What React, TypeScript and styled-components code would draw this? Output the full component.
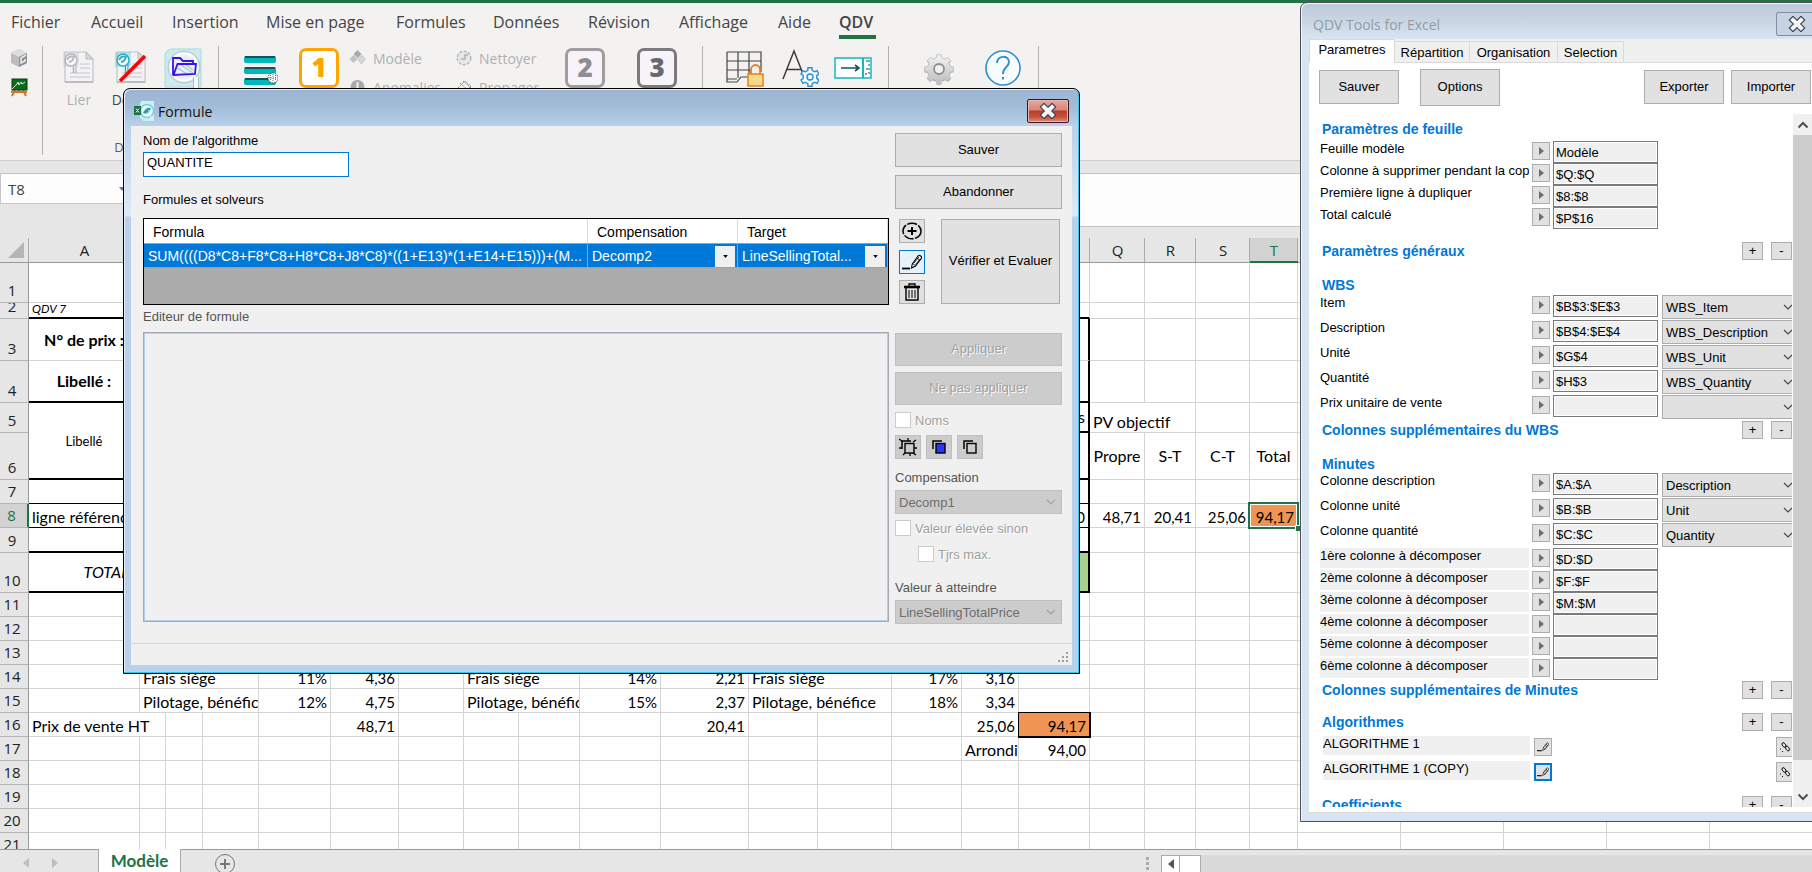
import React from "react";
import styled, { createGlobalStyle, css } from "styled-components";

const ui = `"Open Sans", "Noto Sans", sans-serif`;
const sans = `"Liberation Sans", Arial, sans-serif`;
const cellFont = `Lato, "Open Sans", sans-serif`;
const green = "#217346";
const blue = "#0078d7";

const Global = createGlobalStyle`
  *, *::before, *::after { box-sizing: border-box; }
  body { margin: 0; font-family: ${sans}; font-size: 13px; color: #000; overflow: hidden; }
  button, input, select, textarea { font: inherit; color: inherit; margin: 0; border-radius: 0; }
  button { padding: 0; }
`;

const Page = styled.div`
  position: relative;
  display: flex;
  flex-direction: column;
  height: 100vh;
  overflow: hidden;
  background: #e6e6e6;
`;

/* ---------- Ribbon ---------- */

const RibbonShell = styled.header`
  flex: none;
  border-top: 3px solid ${green};
  border-bottom: 1px solid #d0cecc;
  height: 161px;
  background: #f3f2f1;
  font-family: ${ui};
`;

const Menu = styled.nav`
  display: flex;
  height: 40px;
  padding-left: 11px;
  font-size: 16px;
  line-height: 20px;
  color: #444;
`;

const MenuTab = styled.button<{ $w: number; $active?: boolean }>`
  width: ${(p) => p.$w}px;
  height: 36px;
  padding-top: 9px;
  display: flex;
  justify-content: flex-start;
  align-items: flex-start;
  text-align: left;
  white-space: nowrap;
  border: 0;
  border-bottom: 4px solid ${(p) => (p.$active ? green : "transparent")};
  background: none;
  font-weight: ${(p) => (p.$active ? 600 : 400)};
`;

const Groups = styled.div`
  display: flex;
  height: 112px;
  padding-top: 3px;
`;

const Group = styled.div<{ $w: number; $pad?: number }>`
  position: relative;
  display: flex;
  align-items: flex-start;
  width: ${(p) => p.$w}px;
  height: 109px;
  padding: 2px 0 0 ${(p) => p.$pad ?? 0}px;
  border-right: 1px solid #b5b3b1;
  font-size: 14px;
`;

const GroupCaption = styled.span`
  position: absolute;
  bottom: 0;
  left: 0;
  right: 0;
  text-align: center;
  font-size: 13px;
  line-height: 16px;
  color: #605e5c;
`;

const Tool = styled.button<{ $w: number; $off?: boolean }>`
  display: flex;
  flex-direction: column;
  align-items: center;
  width: ${(p) => p.$w}px;
  border: 0;
  background: none;
  line-height: 20px;
  color: ${(p) => (p.$off ? "#b1b0af" : "#444")};
  svg { display: block; margin-bottom: 6px; }
`;

const ToolColumn = styled.div<{ $w: number }>`
  display: flex;
  flex-direction: column;
  gap: 9px;
  width: ${(p) => p.$w}px;
`;

const SmallTool = styled.button`
  display: flex;
  align-items: center;
  gap: 6px;
  height: 20px;
  border: 0;
  background: none;
  color: #b1b0af;
  svg { flex: none; }
`;

const Step = styled.span<{ $c: string; $t: string; $bg: string }>`
  width: 40px;
  height: 40px;
  border: 3px solid ${(p) => p.$c};
  border-radius: 7px;
  background: ${(p) => p.$bg};
  color: ${(p) => p.$t};
  font-size: 26px;
  font-weight: 800;
  line-height: 33px;
  text-align: center;
`;

/* ---------- Formula bar ---------- */

const FormulaBar = styled.div`
  flex: none;
  display: flex;
  height: 54px;
  margin-top: 12px;
  border-top: 1px solid #c6c6c6;
  border-bottom: 1px solid #c6c6c6;
  background: #fdfdfd;
  font-family: ${ui};
`;

const NameBox = styled.div`
  display: flex;
  justify-content: space-between;
  align-items: center;
  width: 132px;
  height: 30px;
  padding: 0 5px 0 7px;
  border: 1px solid #c6c6c6;
  border-top: 0;
  font-size: 15px;
  color: #444;
`;

const BarFiller = styled.div`
  flex: none;
  width: 132px;
  height: 53px;
  background: #e6e6e6;
`;

/* ---------- Sheet ---------- */

const SheetArea = styled.main`
  flex: 1;
  min-height: 0;
  overflow: hidden;
  background: #fff;
`;

const Sheet = styled.table`
  table-layout: fixed;
  width: 1813px;
  min-width: 100%;
  border-collapse: separate;
  border-spacing: 0;
  font-family: ${cellFont};
  font-size: 16px;
  line-height: 20px;
  td, th { padding: 0; font-weight: 400; }
`;

const ColHead = styled.th<{ $on?: boolean }>`
  height: 36px;
  padding-top: 11px !important;
  background: linear-gradient(#e6e6e6 11px, transparent 11px),
    linear-gradient(to right, transparent calc(100% - 1px), #ababab calc(100% - 1px)),
    ${(p) => (p.$on ? "#d2d2d2" : "#e6e6e6")};
  border-bottom: ${(p) => (p.$on ? `2px solid ${green}` : "1px solid #999")};
  color: ${(p) => (p.$on ? green : "#222")};
  font-family: ${ui};
  font-size: 15px;
  line-height: 20px;
  vertical-align: middle;
`;

const Corner = styled(ColHead)`
  text-align: right;
  svg { display: block; margin-left: 8px; }
`;

const RowHead = styled.th<{ $on?: boolean }>`
  border-right: ${(p) => (p.$on ? `2px solid ${green}` : "1px solid #999")};
  border-bottom: 1px solid #b5b5b5;
  background: ${(p) => (p.$on ? "#d2d2d2" : "#e6e6e6")};
  color: ${(p) => (p.$on ? green : "#222")};
  font-family: ${ui};
  font-size: 15px;
`;

type BoxProps = { $h: number; $align?: string; $mid?: boolean };
const Inner = styled.div<BoxProps>`
  display: flex;
  align-items: ${(p) => (p.$mid ? "center" : "flex-end")};
  justify-content: ${(p) => p.$align ?? "flex-start"};
  height: ${(p) => p.$h}px;
  padding: 0 3px;
  overflow: hidden;
  white-space: nowrap;
`;

const HeadInner = styled(Inner)`
  padding: 0 4px 2px 0;
`;

type CellStyle = {
  $right?: string;
  $bottom?: string;
  $bg?: string;
  $variant?: "bold" | "italic" | "note" | "small" | "num";
  $boxed?: boolean;
};
const Cell = styled.td<CellStyle>`
  position: relative;
  border-right: ${(p) => p.$right ?? "1px solid #d4d4d4"};
  border-bottom: ${(p) => p.$bottom ?? "1px solid #d4d4d4"};
  background: ${(p) => p.$bg ?? "#fff"};
  ${(p) => p.$variant === "bold" && css`font-weight: 700 !important;`}
  ${(p) => p.$variant === "italic" && css`font-style: italic;`}
  ${(p) => p.$variant === "note" && css`font-style: italic; font-size: 12px; line-height: 16px;`}
  ${(p) => p.$variant === "small" && css`font-size: 13px;`}
  ${(p) => p.$variant === "num" && css`font-size: 15px;`}
  ${(p) => p.$boxed && css`box-shadow: 0 0 0 1px #000; border-color: #000; z-index: 1;`}
`;

const Selection = styled.span`
  position: absolute;
  z-index: 2;
  inset: -2px -2px -2px -2px;
  border: 2px solid ${green};
  box-shadow: inset 0 0 0 1px #fff;
  &::after {
    content: "";
    position: absolute;
    right: -4px;
    bottom: -4px;
    width: 6px;
    height: 6px;
    border: solid #fff;
    border-width: 1px 0 0 1px;
    background: ${green};
  }
`;

const COLS = "ABCDEFGHIJKLMNOPQRST".split("");
const WIDTHS = [111, 26, 37, 56, 72, 68, 65, 55, 61, 81, 88, 69, 74, 70, 57, 71, 55, 51, 54, 48, 103, 103, 103, 103, 103];
const HEIGHTS = [40, 16, 42, 42, 30, 47, 24, 24, 25, 40, ...Array(11).fill(24)];
const VISIBLE_HEADS = ["A", "Q", "R", "S", "T"];

type CellData = {
  t: string;
  span?: number;
  rows?: number;
  a?: "center" | "flex-end";
  mid?: boolean;
  v?: CellStyle["$variant"];
  bg?: string;
  boxed?: boolean;
};
const C = "center" as const;
const ORANGE = "#f09454";
const num = (t: string, extra: Partial<CellData> = {}): CellData => ({ t, a: "flex-end", v: "num", ...extra });

const DATA: Record<string, CellData> = {
  A2: { t: "QDV 7", v: "note" },
  A3: { t: "N° de prix :", a: C, mid: true, v: "bold" },
  A4: { t: "Libellé :", a: C, mid: true, v: "bold" },
  A5: { t: "Libellé", a: C, mid: true, v: "small", rows: 2 },
  P5: { t: "es", a: "flex-end", mid: true },
  Q5: { t: "PV objectif", span: 2 },
  Q6: { t: "Propre", a: C, mid: true },
  R6: { t: "S-T", a: C, mid: true },
  S6: { t: "C-T", a: C, mid: true },
  T6: { t: "Total", a: C, mid: true },
  A8: { t: "ligne référence" },
  P8: num("0"),
  Q8: num("48,71"),
  R8: num("20,41"),
  S8: num("25,06"),
  T8: num("94,17", { bg: ORANGE }),
  A10: { t: "TOTAL :", a: "flex-end", mid: true, v: "italic" },
  P10: { t: "", bg: "#a9d08e" },
  B14: { t: "Frais siège", span: 3 },
  E14: num("11%"),
  F14: num("4,36"),
  H14: { t: "Frais siège", span: 2 },
  J14: num("14%"),
  K14: num("2,21"),
  L14: { t: "Frais siège", span: 2 },
  N14: num("17%"),
  O14: num("3,16"),
  B15: { t: "Pilotage, bénéfice", span: 3 },
  E15: num("12%"),
  F15: num("4,75"),
  H15: { t: "Pilotage, bénéfice", span: 2 },
  J15: num("15%"),
  K15: num("2,37"),
  L15: { t: "Pilotage, bénéfice", span: 2 },
  N15: num("18%"),
  O15: num("3,34"),
  A16: { t: "Prix de vente HT", span: 2 },
  F16: num("48,71"),
  K16: num("20,41"),
  O16: num("25,06"),
  P16: num("94,17", { bg: ORANGE, boxed: true }),
  O17: { t: "Arrondi" },
  P17: num("94,00"),
};

const THICK = "2px solid #000";
const THIN = "1px solid #000";
const ROW_LINES: Record<number, string> = { 2: THICK, 4: THICK, 6: THICK, 7: THIN, 8: THIN, 9: THICK, 10: THICK };

function bottomOf(row: number, col: number, rows = 1) {
  if (col > 15) return undefined;
  const last = row + rows - 1;
  if (last === 5 && col > 0) return THICK;
  return ROW_LINES[last];
}

function SheetRow({ row }: { row: number }) {
  const h = HEIGHTS[row - 1];
  const cells: React.ReactNode[] = [];
  for (let c = 0; c < WIDTHS.length; ) {
    const d = DATA[`${COLS[c] ?? "-"}${row}`];
    const span = d?.span ?? 1;
    if (row === 6 && c === 0) {
      c += 1;
      continue;
    }
    const full = d?.rows ? h + HEIGHTS[row] : h;
    const bottom = bottomOf(row, c, d?.rows);
    cells.push(
      <Cell
        key={c}
        colSpan={span}
        rowSpan={d?.rows ?? 1}
        $variant={d?.v}
        $bg={d?.bg}
        $boxed={d?.boxed}
        $right={c === 15 && row >= 3 && row <= 10 ? THICK : undefined}
        $bottom={bottom}
      >
        <Inner $h={full - (bottom === THICK ? 2 : 1)} $align={d?.a} $mid={d?.mid}>
          {d?.t}
        </Inner>
        {row === 8 && c === 19 && <Selection />}
      </Cell>
    );
    c += span;
  }
  return (
    <tr>
      <RowHead scope="row" $on={row === 8}>
        <HeadInner $h={h - 1} $align="center">{row}</HeadInner>
      </RowHead>
      {cells}
    </tr>
  );
}

/* ---------- Sheet tab bar ---------- */

const TabBar = styled.footer`
  flex: none;
  display: flex;
  height: 23px;
  border-top: 1px solid #999;
  background: #e6e6e6;
`;
const TabNav = styled.div`
  display: flex;
  gap: 23px;
  align-items: center;
  width: 99px;
  padding: 4px 0 0 23px;
  border-right: 1px solid #ababab;
`;
const SheetTab = styled.button`
  width: 82px;
  height: 23px;
  margin-top: -1px;
  border: 0;
  border-right: 1px solid #ababab;
  background: #fff;
  color: ${green};
  font: 700 17px/20px ${cellFont};
`;
const AddTab = styled.button`
  width: 22px;
  height: 22px;
  margin: 3px 0 0 33px;
  border: 0;
  background: none;
`;
const HScroll = styled.div`
  display: flex;
  width: 651px;
  margin: 5px 0 0 12px;
  background: #dadada;
`;
const HBtn = styled.button`
  width: 19px;
  height: 19px;
  border: 1px solid #ababab;
  background: #fff;
`;
const HThumb = styled.div`
  width: 21px;
  height: 19px;
  border: 1px solid #ababab;
  border-left: 0;
  background: #fff;
`;
const Spring = styled.div`
  flex: 1;
`;
const Dots = styled.div`
  width: 3px;
  margin-top: 7px;
  svg { display: block; }
`;

/* ---------- Formula dialog ---------- */

const Dialog = styled.section`
  position: absolute;
  z-index: 5;
  left: 123px;
  top: 88px;
  width: 957px;
  display: flex;
  flex-direction: column;
  padding: 0 7px 8px;
  border: 1px solid #000;
  border-radius: 7px 7px 0 0;
  background: linear-gradient(#9ab4d2, #a4bdd9 20px, #b9d1ea 37px, #dbe8f5 120px, #dbe8f5 127px, #b9d1ea 128px);
  box-shadow: inset -1px -1px 0 #35c6ea, inset 1px 1px 0 #e4eef8;
`;

const TitleBar = styled.div`
  display: flex;
  align-items: center;
  height: 37px;
  padding: 7px 3px 0;
  font-family: ${ui};
  font-size: 14px;
  color: #111;
`;
const TitleText = styled.h1`
  flex: 1;
  margin: 0 0 0 4px;
  font: inherit;
`;
const CloseRed = styled.button`
  width: 42px;
  height: 24px;
  border: 1px solid #43101c;
  border-radius: 2px;
  background: linear-gradient(#e8a99e, #d88678 10px, #b93c26 11px, #c35440 17px, #dd8f7c);
  box-shadow: inset 0 0 0 1px #eab5ab;
  svg { display: block; margin: auto; }
`;

const Body = styled.div`
  background: #f0f0f0;
`;
const Columns = styled.div`
  display: flex;
  gap: 6px;
  padding: 7px 10px 19px 12px;
`;
const Left = styled.div`
  width: 746px;
  display: flex;
  flex-direction: column;
`;
const Right = styled.div`
  flex: 1;
  display: flex;
  flex-direction: column;
`;
const Label = styled.label<{ $mt?: number; $mb?: number; $soft?: boolean }>`
  display: block;
  height: 16px;
  line-height: 16px;
  margin: ${(p) => p.$mt ?? 0}px 0 ${(p) => p.$mb ?? 0}px;
  color: ${(p) => (p.$soft ? "#555" : "#000")};
`;
const NameInput = styled.input`
  width: 206px;
  height: 25px;
  padding: 0 3px 4px;
  border: 1px solid ${blue};
  outline: 0;
  background: #fff;
`;
const GridBox = styled.div`
  height: 87px;
  border: 1px solid #000;
  background: #ababab;
`;
const Grid = styled.table`
  width: 100%;
  table-layout: fixed;
  border-collapse: separate;
  border-spacing: 0;
  font-size: 14px;
  th {
    height: 24px;
    padding: 2px 0 0 9px;
    border-right: 1px solid #dcdcdc;
    background: #fff;
    font-size: 14px;
    font-weight: 400;
    text-align: left;
  }
  td {
    height: 25px;
    padding: 0 0 0 4px;
    border: solid #a0a0a0;
    border-width: 1px 1px 1px 0;
    background: ${blue};
    color: #fff;
    white-space: nowrap;
  }
`;
const GridPick = styled.div`
  position: relative;
  display: flex;
`;
const GridSelect = styled.select`
  flex: 1;
  min-width: 0;
  height: 22px;
  padding: 0 24px 0 0;
  border: 0;
  appearance: none;
  background: transparent;
  text-overflow: ellipsis;
`;
const GridArrow = styled.span`
  position: absolute;
  right: 2px;
  top: 1px;
  width: 20px;
  height: 21px;
  background: #f0f0f0;
  pointer-events: none;
  svg { display: block; margin: 9px auto; }
`;
const Editor = styled.textarea`
  width: 746px;
  height: 290px;
  resize: none;
  border: 1px solid #a5aab5;
  box-shadow: inset 0 0 0 1px #b4cfe9;
  background: #f0f0f0;
  outline: 0;
`;
const Btn = styled.button<{ $h?: number; $mb?: number }>`
  height: ${(p) => p.$h ?? 34}px;
  margin-bottom: ${(p) => p.$mb ?? 0}px;
  padding-bottom: 2px;
  border: 1px solid #adadad;
  background: #e1e1e1;
  &:disabled {
    border-color: #bfbfbf;
    background: #ccc;
    color: #a0a0a0;
    text-shadow: 1px 1px 0 #fff;
  }
`;
const VerifyBtn = styled(Btn)`
  width: 119px;
`;
const VerifyRow = styled.div`
  display: flex;
  justify-content: space-between;
  margin: 10px 2px 29px 4px;
`;
const IconCol = styled.div`
  display: flex;
  flex-direction: column;
  justify-content: space-between;
`;
const IconBtn = styled.button<{ $on?: boolean; $dark?: boolean }>`
  display: flex;
  align-items: center;
  justify-content: center;
  width: 26px;
  height: 24px;
  border: 1px solid ${(p) => (p.$on ? blue : p.$dark ? "#bfbfbf" : "#adadad")};
  background: ${(p) => (p.$on ? "#e5f1fb" : p.$dark ? "#ccc" : "#e1e1e1")};
`;
const IconRow = styled.div`
  display: flex;
  gap: 5px;
  margin: 7px 0 11px;
`;
const Check = styled.label<{ $in?: boolean }>`
  display: flex;
  align-items: center;
  gap: 4px;
  height: 16px;
  padding-left: ${(p) => (p.$in ? 23 : 0)}px;
  color: #a0a0a0;
  text-shadow: 1px 1px 0 #fff;
  input {
    width: 16px;
    height: 16px;
    appearance: none;
    border: 1px solid #ccc;
    background: #fff;
  }
`;
const Checks = styled.div`
  display: flex;
  flex-direction: column;
  gap: 10px;
  margin: 6px 0 18px;
`;
const DropWrap = styled.div`
  position: relative;
  display: flex;
  svg { position: absolute; right: 6px; top: 9px; pointer-events: none; }
`;
const Drop = styled.select`
  width: 100%;
  height: 24px;
  padding: 0 3px;
  border: 1px solid #bfbfbf;
  appearance: none;
  background: #ccc;
  color: #6d6d6d;
  opacity: 1;
`;
const Status = styled.div`
  display: flex;
  justify-content: flex-end;
  align-items: flex-end;
  height: 22px;
  padding: 0 3px 2px;
  border-top: 1px solid #d7d7d7;
`;

/* ---------- Tools panel ---------- */

const Panel = styled.aside`
  position: absolute;
  z-index: 6;
  left: 1300px;
  right: -8px;
  top: 2px;
  display: flex;
  flex-direction: column;
  padding: 0 7px 8px 8px;
  border: 1px solid #4d5157;
  border-radius: 7px 0 0 0;
  background: linear-gradient(#bccad9, #c8d6e4 18px, #d7e4f2 36px);
  box-shadow: inset 1px 1px 0 #eef4fa;
`;
const PanelTitle = styled.div`
  display: flex;
  align-items: center;
  height: 36px;
  margin-right: -6px;
  padding: 6px 0 0 4px;
  font-family: ${ui};
  font-size: 14px;
  color: #959a9f;
`;
const CloseGray = styled.button`
  width: 42px;
  height: 24px;
  border: 1px solid #7f8fa5;
  border-radius: 2px;
  background: #c5d3e2;
  svg { display: block; margin: auto; }
`;
const PanelBody = styled.div`
  background: #fff;
`;
const Tabs = styled.div`
  display: flex;
  align-items: flex-end;
  height: 24px;
  background: #f0f0f0;
  box-shadow: inset 0 -1px 0 #d9d9d9;
`;
const Tab = styled.button<{ $w: number; $on?: boolean }>`
  width: ${(p) => p.$w}px;
  height: ${(p) => (p.$on ? 24 : 22)}px;
  padding-bottom: ${(p) => (p.$on ? 4 : 0)}px;
  border: 1px solid #d9d9d9;
  border-left-width: ${(p) => (p.$on ? 1 : 0)}px;
  border-bottom-color: ${(p) => (p.$on ? "#fff" : "#d9d9d9")};
  background: ${(p) => (p.$on ? "#fff" : "#f0f0f0")};
`;
const Actions = styled.div`
  display: flex;
  align-items: center;
  height: 51px;
  padding: 0 1px 3px 10px;
`;
const Action = styled(Btn)<{ $gap: number }>`
  width: 80px;
  margin-left: ${(p) => p.$gap}px;
`;
const ScrollBox = styled.div`
  display: flex;
  height: 693px;
  overflow: hidden;
`;
const Form = styled.div`
  flex: 1;
  min-width: 0;
  padding-left: 11px;
  margin-right: 1px;
  overflow: hidden;
`;
const VBar = styled.div`
  display: flex;
  flex-direction: column;
  width: 19px;
  background: #f0f0f0;
`;
const VBtn = styled.button`
  height: 21px;
  border: 0;
  background: #f0f0f0;
  svg { display: block; margin: auto; }
`;
const VThumb = styled.div`
  height: 625px;
  background: #cdcdcd;
`;
const Heading = styled.div<{ $mt: number; $mb?: number }>`
  display: flex;
  gap: 8px;
  align-items: center;
  height: 18px;
  margin: ${(p) => p.$mt}px 0 ${(p) => p.$mb ?? 0}px 2px;
  h2 {
    flex: 1;
    margin: 0;
    color: ${blue};
    font-size: 14px;
    line-height: 18px;
  }
`;
const PlusMinus = styled.button`
  width: 21px;
  height: 18px;
  border: 1px solid #adadad;
  background: #e1e1e1;
  line-height: 16px;
`;
const Field = styled.div<{ $h: number }>`
  display: flex;
  align-items: flex-start;
  height: ${(p) => p.$h}px;
`;
const FieldLabel = styled.label<{ $shade?: boolean }>`
  width: 209px;
  height: 20px;
  margin-right: 3px;
  overflow: hidden;
  white-space: nowrap;
  line-height: 16px;
  background: ${(p) => (p.$shade ? "#f0f0f0" : "#fff")};
`;
const ArrowBtn = styled.button`
  width: 18px;
  height: 18px;
  margin: 1px 3px 0 0;
  border: 1px solid #adadad;
  background: #e1e1e1;
  svg { display: block; margin: auto; }
`;
const FieldInput = styled.input`
  width: 105px;
  height: 22px;
  padding: 0 2px;
  border: 1px solid #7a7a7a;
  box-shadow: inset 0 0 0 1px #fff;
  background: #f0f0f0;
  outline: 0;
`;
const FieldPick = styled.div`
  position: relative;
  flex: 1;
  min-width: 0;
  margin-left: 4px;
  overflow: hidden;
  svg { position: absolute; right: -1px; top: 9px; pointer-events: none; }
`;
const FieldSelect = styled.select`
  display: block;
  width: 145px;
  height: 24px;
  padding: 0 3px;
  border: 1px solid #adadad;
  appearance: none;
  background: #e1e1e1;
`;
const Algo = styled.div`
  display: flex;
  align-items: flex-start;
  height: 25px;
  padding-left: 3px;
`;
const AlgoName = styled.span`
  width: 207px;
  height: 19px;
  margin-right: 4px;
  background: #f0f0f0;
  line-height: 16px;
`;
const AlgoBtn = styled.button<{ $on?: boolean }>`
  width: 18px;
  height: 18px;
  margin-top: 2px;
  border: ${(p) => (p.$on ? `2px solid ${blue}` : "1px solid #adadad")};
  background: #e1e1e1;
  svg { display: block; margin: auto; }
`;
const AlgoEnd = styled.button`
  width: 16px;
  height: 20px;
  margin: 1px 0 0 auto;
  border: 1px solid #adadad;
  border-right: 0;
  background: #e1e1e1;
  svg { display: block; margin: auto; }
`;
const PanelFoot = styled.div`
  height: 6px;
  border-bottom: 1px solid #d9d9d9;
`;
const PanelHeading = styled(TitleText)`
  margin-left: 0;
`;

/* ---------- Icons ---------- */

const CloseX = ({ s = 18 }: { s?: number }) => (
  <svg width={s} height="16" viewBox="0 0 18 16">
    <path d="M5 4 13 12M13 4 5 12" stroke="#3f4656" strokeWidth="6.400" strokeLinecap="square" />
    <path d="M5 4 13 12M13 4 5 12" stroke="#f6f6f6" strokeWidth="4" strokeLinecap="square" />
  </svg>
);
const Chevron = ({ c = "#444" }: { c?: string }) => (
  <svg width="10" height="7" viewBox="0 0 10 7" fill="none"><path d="M1 1l4 4 4-4" stroke={c} strokeWidth="1.1" /></svg>
);
const DownTri = ({ c = "#000", w = 5 }: { c?: string; w?: number }) => (
  <svg width={w} height={w === 5 ? 3 : 4} viewBox="0 0 6 4"><path d="M0 0h6L3 4z" fill={c} /></svg>
);
const DocIcon = ({ tint, strike }: { tint: string; strike?: boolean }) => (
  <svg width="34" height="36" viewBox="0 0 34 36">
    <path d="M3 4h21l7 7v23H3z" fill="#f3f2f6" stroke="#c4c3c8" strokeWidth="1.2" />
    <path d="M3 34h28" stroke="#b5b4b9" strokeWidth="1.500" />
    <path d="M24 4v7h7z" fill="#d9d8dd" stroke="#b9b8bd" />
    <path d="M18 16h10M18 20h10M8 25h20M8 29h20" stroke="#d6d4da" strokeWidth="1.4" />
    <path d="M1 4h16v13a8 8 0 0 1-3 2v6h-4v-6H1z" fill={tint} opacity=".25" />
    <circle cx="9" cy="12" r="6" fill="#f8f8fa" stroke={tint} strokeWidth="1.500" />
    <path d="M5 12c2-4 5-4 7-3-1 3-3 5-5 5" fill="none" stroke={tint} strokeWidth="1.800" />
    <path d="M11.500 17v8M14 16v9" stroke={tint} />
    {strike && <path d="M6 33 31 8" stroke="#f00" strokeWidth="3.6" />}
  </svg>
);
const FolderIcon = () => (
  <svg width="38" height="40" viewBox="0 0 38 40">
    <path d="M8 1h29v38H1V8a7 7 0 0 1 7-7z" fill="#cdeaef" stroke="#a5dbe2" />
    <circle cx="20" cy="19" r="16" fill="#dfe8ee" stroke="#a9c8d0" />
    <circle cx="20" cy="19" r="13.500" fill="#e9f0f4" stroke="#fff" strokeWidth="2" />
    <path d="M32 29v11" stroke="#a5bfc6" strokeWidth="6" />
    <path d="M32 29v11" stroke="#f5f8fa" strokeWidth="4" />
    <path d="M14 20l10 7M17 17l12 8M22 17l7 5" stroke="#a9cbd2" strokeWidth="1.500" />
    <path d="M9 27V10h7l3 3h10v3M9.500 27l4-11H32l-1 10z" fill="none" stroke="#3a10f0" strokeWidth="1.800" />
  </svg>
);
const BarsIcon = () => (
  <svg width="36" height="40" viewBox="0 0 36 40">
    {[8, 19, 30].map((y) => (
      <g key={y}>
        <rect x="2" y={y} width="32" height="7" rx="2" fill="#00b8b8" />
        <path d={`M3 ${y + 1}h30`} stroke="#14505f" strokeWidth="2" />
      </g>
    ))}
    <circle cx="31" cy="30" r="5" fill="#fff" stroke="#444" strokeDasharray="1.500 1" />
    <path d="M31 26v8M27 30h8M28.500 27v6M33.500 27v6" stroke="#555" strokeWidth=".8" strokeDasharray="1 1" />
  </svg>
);
const GridLock = () => (
  <svg width="40" height="40" viewBox="0 0 40 40" fill="none">
    <path d="M2 4h34v20M2 4v30h10l4-5h7M13 4v26M24 4v22M2 13h34M2 22h25M2 31h10" stroke="#444" strokeWidth="1.200" />
    <path d="M26 26v-4a4.500 5 0 0 1 9 0v4" stroke="#e8811c" strokeWidth="1.800" />
    <rect x="23" y="26" width="15" height="12" fill="#f8d98a" stroke="#e8811c" strokeWidth="1.500" />
  </svg>
);
const gearPath = (cx: number, cy: number, r: number, ri: number, n: number) => {
  const p: string[] = [];
  for (let i = 0; i < n; i++) {
    const a = (i / n) * Math.PI * 2 - Math.PI / 2;
    const s = (Math.PI * 2) / n;
    [[-0.2, r], [0.2, r], [0.3, ri], [0.7, ri]].forEach(([o, q]) =>
      p.push(`${(cx + Math.cos(a + o * s) * q).toFixed(1)} ${(cy + Math.sin(a + o * s) * q).toFixed(1)}`)
    );
  }
  return `M${p.join("L")}z`;
};
const AGear = () => (
  <svg width="40" height="40" viewBox="0 0 40 40" fill="none">
    <path d="M4 31 15 3l9 23M7.500 21.500H22" stroke="#3b3b3b" strokeWidth="1.500" />
    <path d={gearPath(31, 29, 9.5, 7, 6)} fill="#f3f9fd" stroke="#2b8fd0" strokeWidth="1.400" />
    <circle cx="31" cy="29" r="3" stroke="#2b8fd0" strokeWidth="1.400" />
  </svg>
);
const RulerIcon = () => (
  <svg width="40" height="40" viewBox="0 0 40 40" fill="none">
    <rect x="2" y="10" width="36" height="20" fill="#fff" stroke="#13b9bd" strokeWidth="1.500" />
    <path d="M30 10v20" stroke="#13b9bd" strokeWidth="2" />
    <path d="M8 20h17M22 17l4 3-4 3" stroke="#0f5562" strokeWidth="1.600" />
    <path d="M37 13h-4M37 17h-2M37 21h-4M37 25h-2M33 27v-2" stroke="#0f5562" strokeWidth="1.200" />
  </svg>
);
const BigGear = () => (
  <svg width="34" height="40" viewBox="0 0 34 40">
    <defs>
      <linearGradient id="steel" x1="0" y1="0" x2="0" y2="1">
        <stop offset="0" stopColor="#f4f4f5" />
        <stop offset="1" stopColor="#bdbdbf" />
      </linearGradient>
    </defs>
    <path d={gearPath(17, 22, 15, 12, 8)} fill="#a9a9ab" />
    <path d={gearPath(17, 21, 14.5, 11.5, 8)} fill="url(#steel)" stroke="#c6c6c8" />
    <circle cx="17" cy="21" r="5" fill="#f3f2f1" stroke="#8f8f92" strokeWidth="1.800" />
  </svg>
);
const HelpIcon = () => (
  <svg width="38" height="40" viewBox="0 0 38 40" fill="none">
    <circle cx="18" cy="20" r="17" fill="#f9fcfe" stroke="#2b8fd0" strokeWidth="1.600" />
    <path d="M12 15c0-8 12-8 12-1 0 5-6 5-6 12M18 29v2.500" stroke="#2b8fd0" strokeWidth="2" />
  </svg>
);
const CubeIcon = () => (
  <svg width="18" height="20" viewBox="0 0 18 20">
    <path d="M9 1l8 4v10l-8 4-8-4V5z" fill="#bdbcbe" />
    <path d="M9 1l8 4-8 4-8-4z" fill="#dedde0" />
    <path d="M9 9l8-4v10l-8 4z" fill="#8f8e91" />
    <path d="M16 7l-5 3v5l4-2v-2" stroke="#eee" fill="none" strokeWidth="1.500" />
  </svg>
);
const BoardIcon = () => (
  <svg width="18" height="20" viewBox="0 0 18 20">
    <path d="M5 13 2 19M13 13l3 6M1 15h16M9 13v3" stroke="#d8742a" strokeWidth="2" />
    <rect x="2" y="2" width="15" height="11" fill="#0c6b1c" stroke="#0a3d10" />
    <path d="M2 12l5-5 1-2 1 3 2-3 1 2 3-2" stroke="#d8f0d8" fill="none" />
  </svg>
);
const MiniModel = () => (
  <svg width="18" height="16" viewBox="0 0 17 16">
    <path d="M8 0l4 4-4 4-4-4z" fill="#a9a8aa" />
    <path d="M4 5l4 4-4 4-4-4z" fill="#c1c0c3" />
    <path d="M12 5l4 4-4 5-4-5z" fill="#d6d5d8" stroke="#b5b4b6" strokeWidth=".6" />
  </svg>
);
const MiniDial = () => (
  <svg width="17" height="16" viewBox="0 0 17 16" fill="none">
    <circle cx="8" cy="8" r="6.800" fill="#e7e6e9" stroke="#b9b8bb" strokeDasharray="3 1.500" strokeWidth="1.500" />
    <path d="M5 9h4V5h3" stroke="#b1b0b3" strokeWidth="1.500" />
  </svg>
);
const MiniWarn = () => (
  <svg width="18" height="16" viewBox="0 0 17 16">
    <circle cx="8" cy="8" r="7" fill="#a9a8aa" />
    <path d="M8 3v6M8 11v2" stroke="#f3f2f1" strokeWidth="2" />
  </svg>
);
const MiniSpread = () => (
  <svg width="17" height="16" viewBox="0 0 17 16" fill="none">
    <path d="M2 9l7-7 6 5-6 6zM4 4l9 8M7 2l8 7M1 12h5" stroke="#8a898b" strokeDasharray="2 1" />
  </svg>
);
const DialogIcon = () => (
  <svg width="20" height="20" viewBox="0 0 20 20">
    <path d="M7 0h13v20H9l-3-4V3z" fill="#c8f1f6" />
    <circle cx="13" cy="10" r="6.500" fill="#effcfd" stroke="#7fcfda" strokeWidth="1.500" />
    <path d="M9 12c2-5 5-6 8-5-1 3-3 6-6 6z" fill="#1fa5b8" />
    <path d="M10 13c2 0 4-2 5-4M16 15l3 3" stroke="#e6fbfd" />
    <rect x="0" y="5" width="7" height="9" fill="#1b7145" />
    <path d="M2 7.500l3 4M5 7.500l-3 4" stroke="#fff" />
  </svg>
);
const PlusRing = () => (
  <svg width="20" height="18" viewBox="0 0 20 18" fill="none" stroke="#000" strokeWidth="1.500">
    <ellipse cx="10" cy="9" rx="9" ry="7.800" strokeDasharray="10 1.500" />
    <path d="M10 5v8M5.500 9h9" strokeWidth="2" />
  </svg>
);
const PencilIcon = ({ w = 20 }: { w?: number }) => (
  <svg width={w} height={w * 0.8} viewBox="0 0 20 16" fill="none" stroke="#000">
    <path d="M0 14.500h8" strokeWidth="1.800" />
    <path d="M9.500 14l.8-4L16 2c1.500-1.500 4.500.5 3.300 2.500L13.500 12z" fill="#fff" strokeWidth="1.100" />
    <path d="M10.500 9.500l3.500 2.500M15 4l3 2.500M12 9l5-6M13.500 10.500l5-6" strokeWidth=".8" />
  </svg>
);
const TrashIcon = () => (
  <svg width="18" height="18" viewBox="0 0 18 18" fill="none" stroke="#000">
    <path d="M6 3V1h6v2" strokeWidth="1.300" />
    <path d="M1 4h16" strokeWidth="2.600" />
    <path d="M3 5v12h12V5" strokeWidth="1.400" />
    <path d="M6 7v8M9 7v8M12 7v8" strokeWidth="1" />
  </svg>
);
const CopyIcon = ({ fill = "none", rays }: { fill?: string; rays?: boolean }) => (
  <svg width="18" height="18" viewBox="0 0 18 18" fill="none" stroke="#000">
    <path d="M3 11V3h9" strokeWidth="1.500" />
    <rect x="6" y="5.500" width="9" height="9.500" fill={fill} strokeWidth="1.400" />
    {rays && <path d="M0 1l3 2M9 0v3M17 2l-3 2M18 10h-3M0 10h3M4 17l2-2M11 18v-3M17 17l-3-2" strokeWidth="1.300" />}
  </svg>
);
const PairIcon = () => (
  <svg width="12" height="12" viewBox="0 0 12 12" fill="none" stroke="#000" strokeWidth=".9">
    <ellipse cx="5" cy="4" rx="1.600" ry="2.600" transform="rotate(-35 5 4)" />
    <ellipse cx="8.500" cy="7.500" rx="1.600" ry="2.600" transform="rotate(-35 8.500 7.500)" />
    <path d="M1 8h1M3 10.500h1" />
  </svg>
);
const PlayTri = () => (
  <svg width="5" height="8" viewBox="0 0 5 8"><path d="M0 0l5 4-5 4z" fill="#6d6d6d" /></svg>
);
const Grip = () => (
  <svg width="11" height="11" viewBox="0 0 11 11" fill="#a0a0a0">
    {[[8, 0], [4, 4], [8, 4], [0, 8], [4, 8], [8, 8]].map(([x, y]) => (
      <rect key={`${x}${y}`} x={x} y={y} width="2" height="2" />
    ))}
  </svg>
);
const VChevron = ({ up }: { up?: boolean }) => (
  <svg width="12" height="8" viewBox="0 0 12 8" fill="none">
    <path d={up ? "M1.500 6.500 6 2l4.500 4.500" : "M1.500 1.500 6 6l4.500-4.500"} stroke="#505050" strokeWidth="2" />
  </svg>
);

/* ---------- Composition ---------- */

const MENU: [string, number][] = [
  ["Fichier", 80], ["Accueil", 81], ["Insertion", 94], ["Mise en page", 130], ["Formules", 97],
  ["Données", 95], ["Révision", 91], ["Affichage", 99], ["Aide", 61], ["QDV", 37],
];

function Ribbon() {
  return (
    <RibbonShell>
      <Menu>
        {MENU.map(([t, w]) => (
          <MenuTab key={t} $w={w} $active={t === "QDV"}>{t}</MenuTab>
        ))}
      </Menu>
      <Groups>
        <Group $w={43} $pad={10}>
          <ToolColumn $w={20}>
            <SmallTool aria-label="Cube"><CubeIcon /></SmallTool>
            <SmallTool aria-label="Tableau"><BoardIcon /></SmallTool>
          </ToolColumn>
        </Group>
        <Group $w={176} $pad={10}>
          <Tool $w={52} $off><DocIcon tint="#b5b4b8" />Lier</Tool>
          <Tool $w={52}><DocIcon tint="#22afc0" strike />Délier</Tool>
          <Tool $w={52} aria-label="Ouvrir"><FolderIcon /></Tool>
          <GroupCaption>Devis</GroupCaption>
        </Group>
        <Group $w={484} $pad={12}>
          <Tool $w={58} aria-label="Liste"><BarsIcon /></Tool>
          <Tool $w={60}><Step $c="#ffa500" $t="#ffa500" $bg="#fff">1</Step></Tool>
          <ToolColumn $w={107}>
            <SmallTool><MiniModel />Modèle</SmallTool>
            <SmallTool><MiniWarn />Anomalies</SmallTool>
          </ToolColumn>
          <ToolColumn $w={93}>
            <SmallTool><MiniDial />Nettoyer</SmallTool>
            <SmallTool><MiniSpread />Propager</SmallTool>
          </ToolColumn>
          <Tool $w={72}><Step $c="#9f9da0" $t="#8f8d90" $bg="#f6f3f9">2</Step></Tool>
          <Tool $w={72}><Step $c="#7b797c" $t="#6a686b" $bg="#f6f3f9">3</Step></Tool>
        </Group>
        <Group $w={186} $pad={15}>
          <Tool $w={54} aria-label="Verrouiller"><GridLock /></Tool>
          <Tool $w={54} aria-label="Style"><AGear /></Tool>
          <Tool $w={54} aria-label="Largeur"><RulerIcon /></Tool>
        </Group>
        <Group $w={150} $pad={17}>
          <Tool $w={65} aria-label="Réglages"><BigGear /></Tool>
          <Tool $w={65} aria-label="Aide"><HelpIcon /></Tool>
        </Group>
      </Groups>
    </RibbonShell>
  );
}

function FormulaDialog() {
  return (
    <Dialog role="dialog" aria-labelledby="dlg-title">
      <TitleBar>
        <DialogIcon />
        <TitleText id="dlg-title">Formule</TitleText>
        <CloseRed aria-label="Fermer"><CloseX /></CloseRed>
      </TitleBar>
      <Body>
        <Columns>
          <Left>
            <Label htmlFor="algo-name" $mb={3}>Nom de l'algorithme</Label>
            <NameInput id="algo-name" defaultValue="QUANTITE" autoFocus />
            <Label as="div" $mt={15} $mb={10}>Formules et solveurs</Label>
            <GridBox>
              <Grid>
                <colgroup><col style={{ width: 444 }} /><col style={{ width: 150 }} /><col /></colgroup>
                <thead><tr><th>Formula</th><th>Compensation</th><th>Target</th></tr></thead>
                <tbody>
                  <tr>
                    <td>SUM((((D8*C8+F8*C8+H8*C8+J8*C8)*((1+E13)*(1+E14+E15)))+(M...</td>
                    <td>
                      <GridPick>
                        <GridSelect aria-label="Compensation"><option>Decomp2</option></GridSelect>
                        <GridArrow><DownTri /></GridArrow>
                      </GridPick>
                    </td>
                    <td>
                      <GridPick>
                        <GridSelect aria-label="Target"><option>LineSellingTotal...</option></GridSelect>
                        <GridArrow><DownTri /></GridArrow>
                      </GridPick>
                    </td>
                  </tr>
                </tbody>
              </Grid>
            </GridBox>
            <Label htmlFor="editor" $mt={4} $mb={7} $soft>Editeur de formule</Label>
            <Editor id="editor" readOnly />
          </Left>
          <Right>
            <Btn $mb={8}>Sauver</Btn>
            <Btn>Abandonner</Btn>
            <VerifyRow>
              <IconCol>
                <IconBtn aria-label="Ajouter"><PlusRing /></IconBtn>
                <IconBtn $on aria-label="Modifier"><PencilIcon /></IconBtn>
                <IconBtn aria-label="Supprimer"><TrashIcon /></IconBtn>
              </IconCol>
              <VerifyBtn $h={85}>Vérifier et Evaluer</VerifyBtn>
            </VerifyRow>
            <Btn $h={33} $mb={6} disabled>Appliquer</Btn>
            <Btn $h={33} $mb={7} disabled>Ne pas appliquer</Btn>
            <Check><input type="checkbox" disabled />Noms</Check>
            <IconRow>
              <IconBtn $dark aria-label="Cadre"><CopyIcon rays /></IconBtn>
              <IconBtn $dark aria-label="Copie pleine"><CopyIcon fill="#2a35ff" /></IconBtn>
              <IconBtn $dark aria-label="Copie"><CopyIcon /></IconBtn>
            </IconRow>
            <Label htmlFor="comp" $mb={4} $soft>Compensation</Label>
            <DropWrap>
              <Drop id="comp" disabled><option>Decomp1</option></Drop>
              <Chevron c="#a0a0a0" />
            </DropWrap>
            <Checks>
              <Check><input type="checkbox" disabled />Valeur élevée sinon</Check>
              <Check $in><input type="checkbox" disabled />Tjrs max.</Check>
            </Checks>
            <Label htmlFor="target" $mb={4} $soft>Valeur à atteindre</Label>
            <DropWrap>
              <Drop id="target" disabled><option>LineSellingTotalPrice</option></Drop>
              <Chevron c="#a0a0a0" />
            </DropWrap>
          </Right>
        </Columns>
        <Status><Grip /></Status>
      </Body>
    </Dialog>
  );
}

type F = { label: string; value: string; pick?: string; shade?: boolean };
function FieldLine({ label, value, pick, shade, h, id }: F & { h: number; id: string }) {
  return (
    <Field $h={h}>
      <FieldLabel htmlFor={id} $shade={shade}>{label}</FieldLabel>
      <ArrowBtn aria-label={`Choisir ${label}`}><PlayTri /></ArrowBtn>
      <FieldInput id={id} readOnly value={value} />
      {pick !== undefined && (
        <FieldPick>
          <FieldSelect aria-label={label}><option>{pick}</option></FieldSelect>
          <Chevron />
        </FieldPick>
      )}
    </Field>
  );
}

function Section({ title, mt, mb, edit }: { title: string; mt: number; mb?: number; edit?: boolean }) {
  return (
    <Heading $mt={mt} $mb={mb}>
      <h2>{title}</h2>
      {edit && <><PlusMinus>+</PlusMinus><PlusMinus>-</PlusMinus></>}
    </Heading>
  );
}

const SHEET_FIELDS: F[] = [
  { label: "Feuille modèle", value: "Modèle" },
  { label: "Colonne à supprimer pendant la copie", value: "$Q:$Q" },
  { label: "Première ligne à dupliquer", value: "$8:$8" },
  { label: "Total calculé", value: "$P$16" },
];
const WBS_FIELDS: F[] = [
  { label: "Item", value: "$B$3:$E$3", pick: "WBS_Item" },
  { label: "Description", value: "$B$4:$E$4", pick: "WBS_Description" },
  { label: "Unité", value: "$G$4", pick: "WBS_Unit" },
  { label: "Quantité", value: "$H$3", pick: "WBS_Quantity" },
  { label: "Prix unitaire de vente", value: "", pick: "" },
];
const MINUTE_FIELDS: F[] = [
  { label: "Colonne description", value: "$A:$A", pick: "Description" },
  { label: "Colonne unité", value: "$B:$B", pick: "Unit" },
  { label: "Colonne quantité", value: "$C:$C", pick: "Quantity" },
];
const SPLIT_FIELDS: F[] = ["$D:$D", "$F:$F", "$M:$M", "", "", ""].map((value, i) => ({
  label: `${i + 1}${i ? "ème" : "ère"} colonne à décomposer`,
  value,
  shade: true,
}));

function ToolsPanel() {
  const lines = (list: F[], h: number, key: string) =>
    list.map((f, i) => <FieldLine key={f.label} {...f} h={h} id={`${key}${i}`} />);
  return (
    <Panel>
      <PanelTitle>
        <PanelHeading as="h2">QDV Tools for Excel</PanelHeading>
        <CloseGray aria-label="Fermer"><CloseX s={20} /></CloseGray>
      </PanelTitle>
      <PanelBody>
        <Tabs>
          <Tab $w={86} $on>Parametres</Tab>
          <Tab $w={75}>Répartition</Tab>
          <Tab $w={88}>Organisation</Tab>
          <Tab $w={66}>Selection</Tab>
        </Tabs>
        <Actions>
          <Action $gap={0}>Sauver</Action>
          <Action $gap={21} $h={37}>Options</Action>
          <Spring />
          <Action $gap={0}>Exporter</Action>
          <Action $gap={7}>Importer</Action>
        </Actions>
        <ScrollBox>
          <Form>
            <Section title="Paramètres de feuille" mt={6} mb={3} />
            {lines(SHEET_FIELDS, 22, "s")}
            <Section title="Paramètres généraux" mt={13} edit />
            <Section title="WBS" mt={16} mb={1} />
            {lines(WBS_FIELDS, 25, "w")}
            <Section title="Colonnes supplémentaires du WBS" mt={1} edit />
            <Section title="Minutes" mt={16} />
            {lines(MINUTE_FIELDS, 25, "m")}
            {lines(SPLIT_FIELDS, 22, "d")}
            <Section title="Colonnes supplémentaires de Minutes" mt={1} edit />
            <Section title="Algorithmes" mt={14} mb={5} edit />
            {["ALGORITHME 1", "ALGORITHME 1 (COPY)"].map((name, i) => (
              <Algo key={name}>
                <AlgoName>{name}</AlgoName>
                <AlgoBtn $on={i === 1} aria-label={`Modifier ${name}`}><PencilIcon w={12} /></AlgoBtn>
                <AlgoEnd aria-label={`Options ${name}`}><PairIcon /></AlgoEnd>
              </Algo>
            ))}
            <Section title="Coefficients" mt={10} edit />
          </Form>
          <VBar>
            <VBtn aria-label="Monter"><VChevron up /></VBtn>
            <VThumb />
            <Spring />
            <VBtn aria-label="Descendre"><VChevron /></VBtn>
          </VBar>
        </ScrollBox>
        <PanelFoot />
      </PanelBody>
    </Panel>
  );
}

export default function App() {
  return (
    <Page>
      <Global />
      <Ribbon />
      <FormulaBar>
        <div>
          <NameBox>T8<DownTri c="#777" w={8} /></NameBox>
          <BarFiller />
        </div>
      </FormulaBar>
      <SheetArea>
        <Sheet>
          <colgroup>
            <col style={{ width: 29 }} />
            {WIDTHS.map((w, i) => <col key={i} style={{ width: w }} />)}
          </colgroup>
          <thead>
            <tr>
              <Corner><svg width="16" height="16" viewBox="0 0 16 16"><path d="M16 0v16H0z" fill="#b5b5b5" /></svg></Corner>
              {WIDTHS.map((_, i) => (
                <ColHead key={i} scope="col" $on={COLS[i] === "T"}>
                  {VISIBLE_HEADS.includes(COLS[i]) ? COLS[i] : null}
                </ColHead>
              ))}
            </tr>
          </thead>
          <tbody>{HEIGHTS.map((_, i) => <SheetRow key={i} row={i + 1} />)}</tbody>
        </Sheet>
      </SheetArea>
      <TabBar>
        <TabNav>
          <svg width="6" height="10" viewBox="0 0 6 10"><path d="M6 0v10L0 5z" fill="#bdbdbd" /></svg>
          <svg width="6" height="10" viewBox="0 0 6 10"><path d="M0 0v10l6-5z" fill="#bdbdbd" /></svg>
        </TabNav>
        <SheetTab>Modèle</SheetTab>
        <AddTab aria-label="Nouvelle feuille">
          <svg width="22" height="22" viewBox="0 0 22 22" fill="none" stroke="#777">
            <circle cx="11" cy="11" r="9.500" />
            <path d="M11 6v10M6 11h10" strokeWidth="2" />
          </svg>
        </AddTab>
        <Spring />
        <Dots>
          <svg width="3" height="15" viewBox="0 0 3 15" fill="#ababab"><path d="M0 0h3v3H0zM0 5h3v3H0zM0 10h3v3H0z" /></svg>
        </Dots>
        <HScroll>
          <HBtn aria-label="Défiler à gauche"><svg width="6" height="10" viewBox="0 0 6 10"><path d="M6 0v10L0 5z" fill="#555" /></svg></HBtn>
          <HThumb />
        </HScroll>
      </TabBar>
      <FormulaDialog />
      <ToolsPanel />
    </Page>
  );
}
